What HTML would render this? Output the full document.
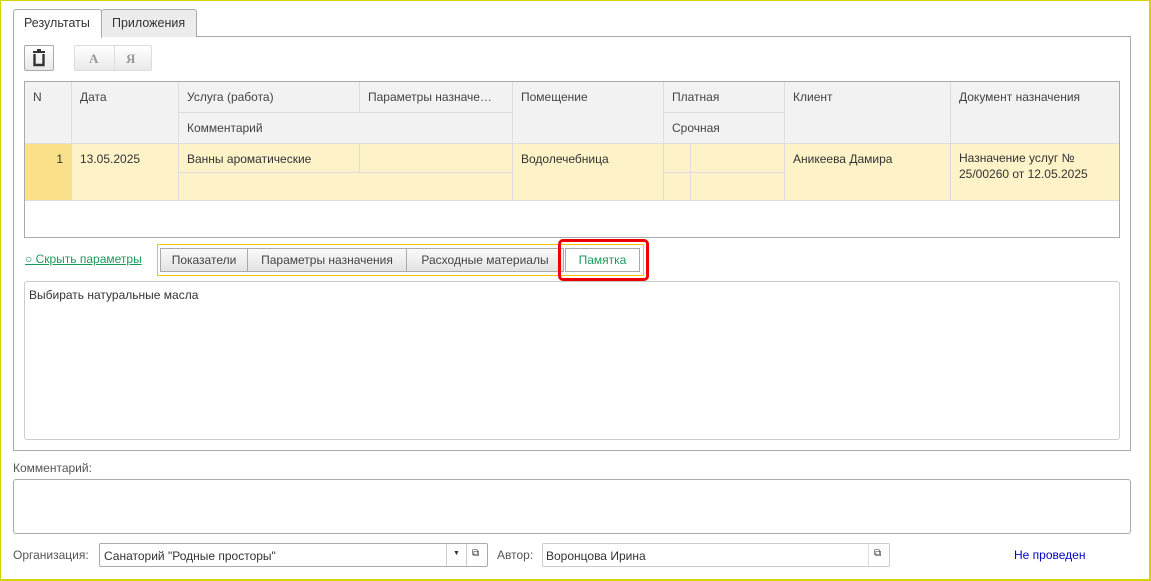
<!DOCTYPE html>
<html><head><meta charset="utf-8"><style>
*{box-sizing:border-box;margin:0;padding:0}
body{width:1151px;height:581px;background:#fff;font-family:"Liberation Sans",Arial,sans-serif;font-size:12px;color:#333;position:relative;overflow:hidden}
.a{position:absolute}
.tab{position:absolute;top:9px;height:28px;border:1px solid #aaa;border-bottom:none;padding:6px 10px;font-size:12.5px;border-radius:3px 3px 0 0}
.c{position:absolute;padding:8px;font-size:12px;border-right:1px solid #ddd;border-bottom:1px solid #ddd;}
.h{background:#f2f2f2;color:#444}
.y{background:#fdf2c8;color:#333}
.btn{position:absolute;top:248px;height:24px;border:1px solid #aaa;background:linear-gradient(#fafafa,#e4e4e4);padding:4px 0;text-align:center;font-size:12px;color:#444;white-space:nowrap}
</style></head><body>
<div class="a" style="left:0;top:0;width:1151px;height:581px;border:1px solid #d4d400;border-width:1px 2px 2px 1px;z-index:5;pointer-events:none"></div>
<div class="a" style="left:13px;top:36px;width:1118px;height:415px;border:1px solid #aaa"></div>
<div class="tab" style="left:13px;width:89px;background:#fff;height:29px">Результаты</div>
<div class="tab" style="left:101px;width:96px;background:#ececec">Приложения</div>
<div class="a" style="left:24px;top:45px;width:30px;height:26px;border:1px solid #aaa;border-radius:2px;background:linear-gradient(#fff,#e8e8e8)"><svg width="28" height="24" viewBox="0 0 28 24"><rect x="8" y="5" width="12" height="2" fill="#333"/><rect x="12" y="3" width="4" height="2" fill="#333"/><path d="M9.5 8v11h9V8" fill="none" stroke="#333" stroke-width="2.4"/></svg></div>
<div class="a" style="left:74px;top:45px;width:78px;height:26px;border:1px solid #ddd;border-radius:2px;background:linear-gradient(#fff,#eaeaea);font-family:'Liberation Serif',serif;font-weight:bold;color:#999;font-size:13px"><span class="a" style="left:14px;top:5px">А</span><span class="a" style="left:39px;top:0;width:1px;height:24px;background:#ddd"></span><span class="a" style="left:51px;top:5px">Я</span></div>
<div class="a" style="left:24px;top:81px;width:1096px;height:157px;border:1px solid #aaa;overflow:hidden">
<div class="c h" style="left:0;top:0;width:47px;height:62px">N</div>
<div class="c h" style="left:47px;top:0;width:107px;height:62px">Дата</div>
<div class="c h" style="left:154px;top:0;width:181px;height:31px">Услуга (работа)</div>
<div class="c h" style="left:335px;top:0;width:153px;height:31px;white-space:nowrap;overflow:hidden">Параметры назначе…</div>
<div class="c h" style="left:154px;top:31px;width:334px;height:31px">Комментарий</div>
<div class="c h" style="left:488px;top:0;width:151px;height:62px">Помещение</div>
<div class="c h" style="left:639px;top:0;width:121px;height:31px">Платная</div>
<div class="c h" style="left:639px;top:31px;width:121px;height:31px">Срочная</div>
<div class="c h" style="left:760px;top:0;width:166px;height:62px">Клиент</div>
<div class="c h" style="left:926px;top:0;width:170px;height:62px">Документ назначения</div>
<div class="c" style="left:0;top:62px;width:47px;height:57px;background:#fbe08a;text-align:right">1</div>
<div class="c y" style="left:47px;top:62px;width:107px;height:57px">13.05.2025</div>
<div class="c y" style="left:154px;top:62px;width:181px;height:29px">Ванны ароматические</div>
<div class="c y" style="left:335px;top:62px;width:153px;height:29px"></div>
<div class="c y" style="left:154px;top:91px;width:334px;height:28px"></div>
<div class="c y" style="left:488px;top:62px;width:151px;height:57px">Водолечебница</div>
<div class="c y" style="left:639px;top:62px;width:27px;height:29px"></div>
<div class="c y" style="left:666px;top:62px;width:94px;height:29px"></div>
<div class="c y" style="left:639px;top:91px;width:27px;height:28px"></div>
<div class="c y" style="left:666px;top:91px;width:94px;height:28px"></div>
<div class="c y" style="left:760px;top:62px;width:166px;height:57px">Аникеева Дамира</div>
<div class="c y" style="left:926px;top:62px;width:170px;height:57px;line-height:16px;padding-top:6px">Назначение услуг №<br>25/00260 от 12.05.2025</div>
</div>
<div class="a" style="left:25px;top:252px;color:#1a9a5a;text-decoration:underline;font-size:12px">○ Скрыть параметры</div>
<div class="a" style="left:157px;top:244px;width:487px;height:32px;border:1px solid #f3c400"></div>
<div class="btn" style="left:160px;width:88px">Показатели</div>
<div class="btn" style="left:247px;width:160px">Параметры назначения</div>
<div class="btn" style="left:406px;width:158px">Расходные материалы</div>
<div class="btn" style="left:565px;width:75px;background:#fff;color:#1a9a5a">Памятка</div>
<div class="a" style="left:558px;top:239px;width:91px;height:42px;border:3px solid #e00;border-radius:5px"></div>
<div class="a" style="left:24px;top:281px;width:1096px;height:159px;border:1px solid #ccc;border-radius:3px;padding:6px 4px;font-size:12px">Выбирать натуральные масла</div>
<div class="a" style="left:13px;top:461px;color:#555;font-size:12px">Комментарий:</div>
<div class="a" style="left:13px;top:479px;width:1118px;height:55px;border:1px solid #aaa;border-radius:3px"></div>
<div class="a" style="left:13px;top:548px;color:#555;font-size:12px">Организация:</div>
<div class="a" style="left:99px;top:543px;width:389px;height:24px;border:1px solid #aaa;border-radius:2px;padding:5px 4px;font-size:12px">Санаторий "Родные просторы"<span class="a" style="left:346px;top:0;width:1px;height:22px;background:#ccc"></span><span class="a" style="left:353px;top:6px;font-size:7px">▼</span><span class="a" style="left:366px;top:0;width:1px;height:22px;background:#ccc"></span><span class="a" style="left:372px;top:4px;font-size:10px">⧉</span></div>
<div class="a" style="left:497px;top:548px;color:#555;font-size:12px">Автор:</div>
<div class="a" style="left:542px;top:543px;width:348px;height:24px;border:1px solid #ccc;border-radius:2px;padding:5px 3px;font-size:12px">Воронцова Ирина<span class="a" style="left:325px;top:0;width:1px;height:22px;background:#ddd"></span><span class="a" style="left:331px;top:4px;font-size:10px">⧉</span></div>
<div class="a" style="left:1014px;top:548px;color:#00c;font-size:12px">Не проведен</div>
</body></html>
